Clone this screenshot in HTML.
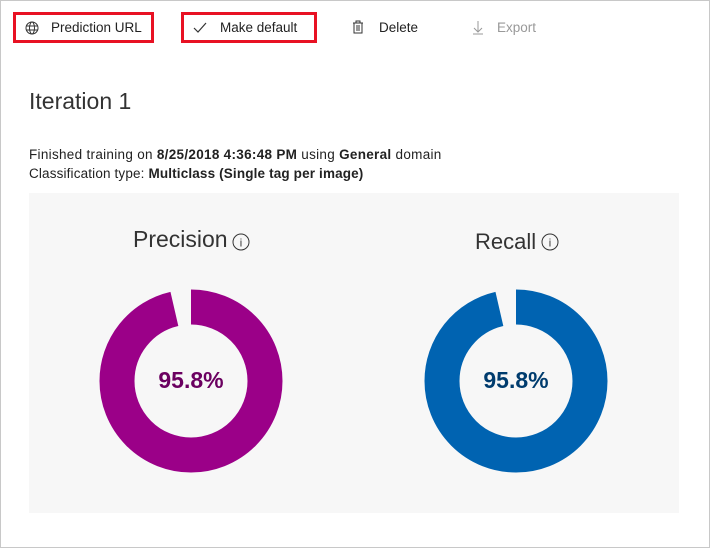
<!DOCTYPE html>
<html><head><style>
body{margin:0;width:710px;height:548px;background:#fff;font-family:"Liberation Sans",sans-serif;position:relative;overflow:hidden}
.frame{position:absolute;left:0;top:0;width:708px;height:546px;border:1px solid #c8c8c8}
.t{position:absolute;font-size:13.5px;color:#222;white-space:nowrap}
.box{position:absolute;border:3px solid #e81123;box-sizing:border-box}
</style></head><body>
<div class="frame"></div>
<div class="box" style="left:13px;top:12px;width:141px;height:31px"></div>
<div class="box" style="left:181px;top:12px;width:136px;height:31px"></div>
<svg style="position:absolute;left:25px;top:21px" width="14" height="14" viewBox="0 0 14 14" fill="none" stroke="#333" stroke-width="1"><circle cx="7" cy="7" r="6"/><ellipse cx="7" cy="7" rx="2.5" ry="6"/><path d="M1 5h12M1 9h12"/></svg>
<div class="t" style="left:51px;top:20px">Prediction URL</div>
<svg style="position:absolute;left:193px;top:22px" width="14" height="12" viewBox="0 0 14 12" fill="none" stroke="#333" stroke-width="1.2"><path d="M1 6l4 4 8-9"/></svg>
<div class="t" style="left:220px;top:20px">Make default</div>
<svg style="position:absolute;left:352px;top:20px" width="12" height="14" viewBox="0 0 12 14" fill="none" stroke="#333"><path d="M1 3h10M4 3V1h4v2M2 3v10h8V3M5 5v6M7 5v6"/></svg>
<div class="t" style="left:379px;top:20px">Delete</div>
<svg style="position:absolute;left:472px;top:20px" width="12" height="15" viewBox="0 0 12 15" fill="none" stroke="#999"><path d="M6 1v11M2 8l4 4 4-4M1 14h10"/></svg>
<div class="t" style="left:497px;top:20px;color:#999">Export</div>
<div class="t" style="left:29px;top:88px;font-size:23px;color:#333">Iteration 1</div>
<div class="t" style="left:29px;top:147px;font-size:13.5px;letter-spacing:0.3px">Finished training on <b>8/25/2018 4:36:48 PM</b> using <b>General</b> domain</div>
<div class="t" style="left:29px;top:166px;font-size:13.5px;letter-spacing:0.15px">Classification type: <b>Multiclass (Single tag per image)</b></div>
<div style="position:absolute;left:29px;top:193px;width:650px;height:320px;background:#f7f7f7"></div>
<div class="t" style="left:133px;top:226px;font-size:23px;color:#333">Precision</div>
<svg style="position:absolute;left:232px;top:233px" width="18" height="18"><circle cx="9" cy="9" r="8" fill="none" stroke="#333"/><text x="9" y="13.5" font-size="11" text-anchor="middle" fill="#333" font-family="Liberation Sans">i</text></svg>
<div class="t" style="left:475px;top:229px;font-size:22px;color:#333">Recall</div>
<svg style="position:absolute;left:541px;top:233px" width="18" height="18"><circle cx="9" cy="9" r="8" fill="none" stroke="#333"/><text x="9" y="13.5" font-size="11" text-anchor="middle" fill="#333" font-family="Liberation Sans">i</text></svg>
<svg style="position:absolute;left:0;top:0" width="710" height="548">
<circle cx="191" cy="381" r="74" fill="none" stroke="#9b0088" stroke-width="35" stroke-dasharray="448 465" transform="rotate(-90 191 381)"/>
<circle cx="516" cy="381" r="74" fill="none" stroke="#0063b1" stroke-width="35" stroke-dasharray="448 465" transform="rotate(-90 516 381)"/>
<text x="191" y="380" dy="0.35em" font-size="23" font-weight="bold" text-anchor="middle" fill="#6b0060" font-family="Liberation Sans">95.8%</text>
<text x="516" y="380" dy="0.35em" font-size="23" font-weight="bold" text-anchor="middle" fill="#003c6e" font-family="Liberation Sans">95.8%</text>
</svg>
</body></html>
